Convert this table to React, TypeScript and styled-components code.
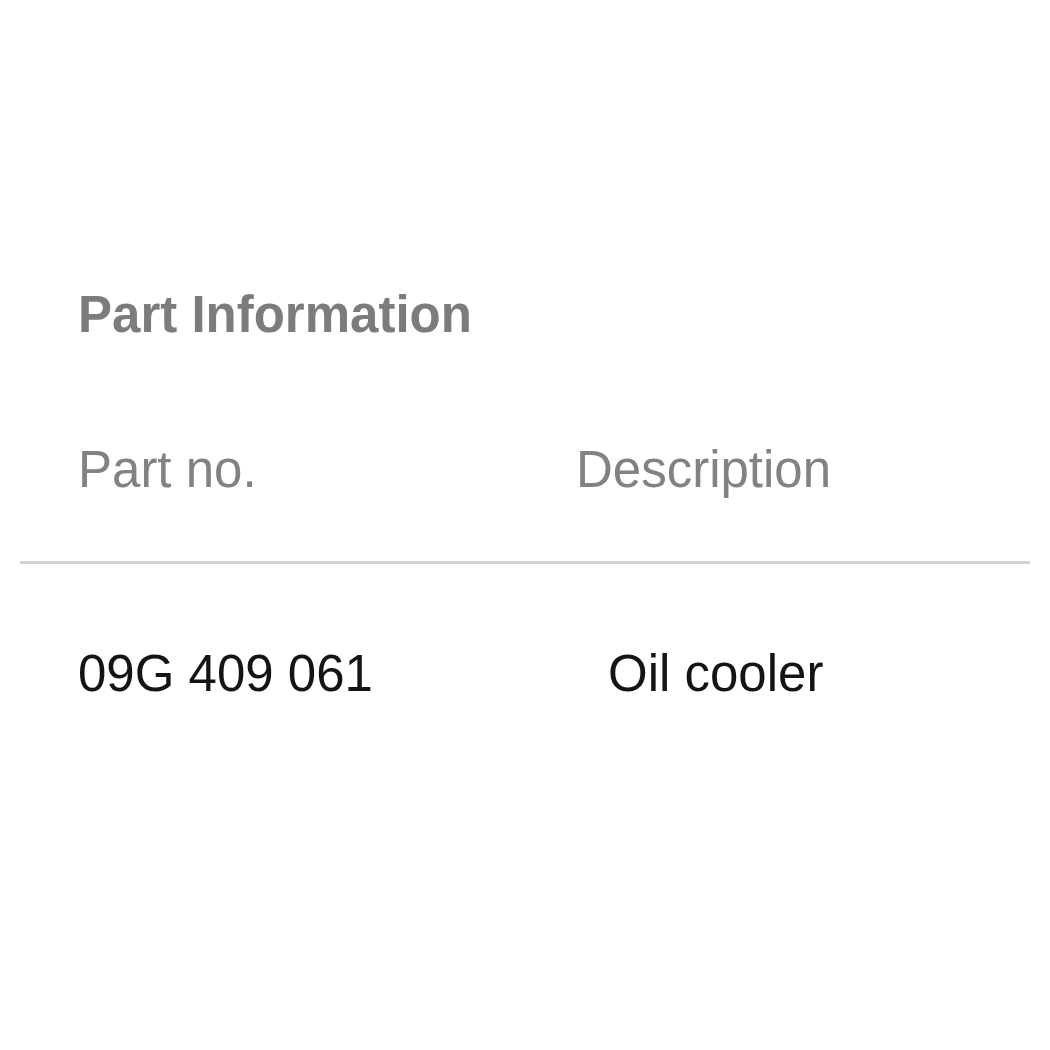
import React from 'react';
import styled, { createGlobalStyle } from 'styled-components';

const GlobalStyle = createGlobalStyle`
  body {
    margin: 0;
    background: #ffffff;
    font-family: 'Liberation Sans', Arial, sans-serif;
  }
`;

const Page = styled.div`
  padding: 286px 20px 0;
`;

const Title = styled.h2`
  margin: 0 0 97px 58px;
  font-size: 51px;
  line-height: 58px;
  font-weight: bold;
  color: #7c7c7c;
`;

const Row = styled.div<{ header?: boolean }>`
  display: grid;
  grid-template-columns: 498px 1fr;
  padding: ${(p) => (p.header ? '0 0 62px 58px' : '81px 0 0 58px')};
  border-bottom: ${(p) => (p.header ? '3px solid #d2d2d2' : 'none')};
`;

const Cell = styled.div<{ header?: boolean; indent?: number }>`
  font-size: 51px;
  line-height: 58px;
  color: ${(p) => (p.header ? '#828282' : '#141414')};
  padding-left: ${(p) => p.indent ?? 0}px;
  white-space: nowrap;
`;

const App: React.FC = () => {
  return (
    <Page>
      <GlobalStyle />
      <Title>Part Information</Title>
      <Row header>
        <Cell header>Part no.</Cell>
        <Cell header>Description</Cell>
      </Row>
      <Row>
        <Cell>09G 409 061</Cell>
        <Cell indent={32}>Oil cooler</Cell>
      </Row>
    </Page>
  );
};

export default App;
